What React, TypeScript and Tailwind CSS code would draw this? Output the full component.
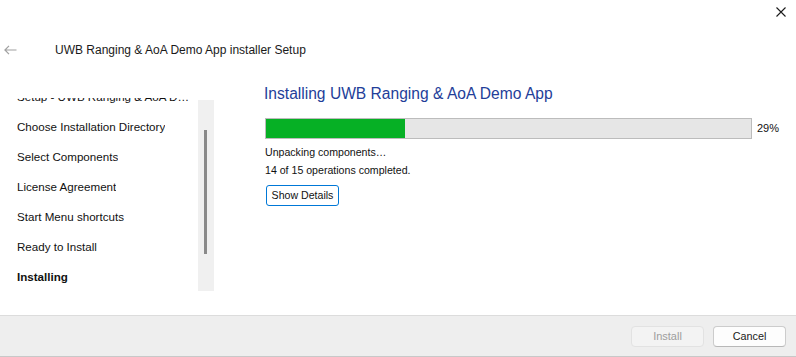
import React from "react";

const steps = [
  "Setup - UWB Ranging & AoA Demo App",
  "Choose Installation Directory",
  "Select Components",
  "License Agreement",
  "Start Menu shortcuts",
  "Ready to Install",
];

export default function App() {
  return (
    <div className="w-[796px] h-[357px] flex flex-col bg-white text-[#000] overflow-hidden font-['Liberation_Sans',Arial,sans-serif]">
      {/* top bar with close */}
      <div className="h-[30px] flex justify-end items-start pr-[10px] pt-[7px] shrink-0">
        <svg width="10" height="10" viewBox="0 0 10 10" className="block">
          <path d="M0.5 0.5 L9.5 9.5 M9.5 0.5 L0.5 9.5" stroke="#1a1a1a" strokeWidth="1.1" fill="none" />
        </svg>
      </div>
      {/* header */}
      <div className="h-[40px] flex items-center shrink-0">
        <div className="w-[55px] pl-[4px] flex items-center">
          <svg width="13" height="10" viewBox="0 0 13 10" className="block">
            <path d="M12.5 5 H1 M5 0.8 L0.9 5 L5 9.2" stroke="#a0a0a0" strokeWidth="1.2" fill="none" />
          </svg>
        </div>
        <span className="text-[12px] leading-[16px] text-[#1a1a1a]">UWB Ranging &amp; AoA Demo App installer Setup</span>
      </div>
      {/* main */}
      <div className="flex flex-1 min-h-0">
        <div className="w-[214px] shrink-0 pt-[28px]">
          <div className="flex h-[193px]">
            <div className="w-[198px] overflow-hidden">
              <div className="mt-[-16px]">
                {steps.map((s) => (
                  <div key={s} className="h-[30px] flex items-center pl-[17px] text-[11.6px] text-[#111] whitespace-nowrap overflow-hidden">
                    <span className="truncate max-w-[175px]">{s}</span>
                  </div>
                ))}
                <div className="h-[30px] flex items-center pl-[17px] text-[11.6px] font-bold text-[#111]">Installing</div>
              </div>
            </div>
            <div className="w-[16px] h-[191px] mt-[2px] bg-[#f0f0f0] pt-[30px] pl-[6px]">
              <div className="w-[2.5px] h-[124px] bg-[#8a8a8a]" />
            </div>
          </div>
        </div>
        <div className="flex-1 pl-[51px]">
          <div className="mt-[14px] -ml-px text-[15.6px] leading-[20px] text-[#233e99]">
            Installing UWB Ranging &amp; AoA Demo App
          </div>
          <div className="mt-[14px] flex items-center">
            <div className="w-[487px] h-[21px] border border-[#bcbcbc] bg-[#e6e6e6] flex">
              <div className="w-[139px] h-full bg-[#06b025]" />
            </div>
            <span className="ml-[5px] text-[11px] text-[#111]">29%</span>
          </div>
          <div className="mt-[4px] text-[10.6px] leading-[18px] text-[#111]">Unpacking components…</div>
          <div className="text-[10.6px] leading-[18px] text-[#111]">14 of 15 operations completed.</div>
          <button className="mt-[6px] ml-px h-[21px] w-[73px] border border-[#0078d7] rounded-[3px] bg-white text-[10.6px] text-[#111] flex items-center justify-center">
            Show Details
          </button>
        </div>
      </div>
      {/* bottom bar */}
      <div className="h-[42px] shrink-0 bg-[#eeeeee] border-t border-[#dcdcdc] border-b border-b-[#c8c8c8] flex items-center justify-end pr-[10px] gap-[9px]">
        <button className="h-[21px] w-[73px] rounded-[4px] border border-[#e2e2e2] bg-[#f3f3f3] text-[11px] text-[#9d9d9d] flex items-center justify-center">
          Install
        </button>
        <button className="h-[21px] w-[73px] rounded-[4px] border border-[#cccccc] border-b-[#b8b8b8] bg-[#fdfdfd] text-[10.8px] text-[#1a1a1a] flex items-center justify-center">
          Cancel
        </button>
      </div>
    </div>
  );
}
